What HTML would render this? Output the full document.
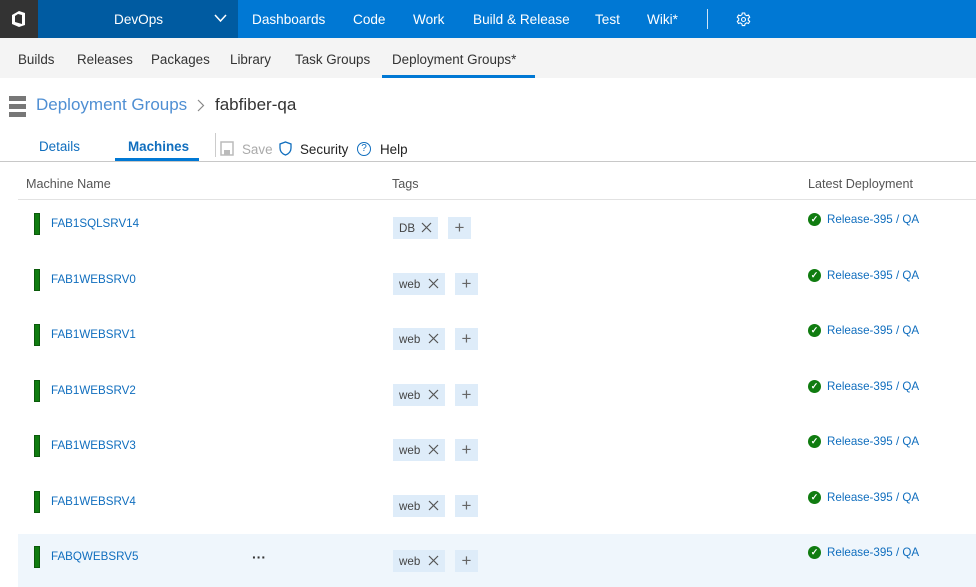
<!DOCTYPE html>
<html><head><style>
*{margin:0;padding:0;box-sizing:border-box}
body{width:976px;height:587px;overflow:hidden;font-family:"Liberation Sans",sans-serif;background:#fff;position:relative;color:#333}
.a{position:absolute;white-space:nowrap}
.top{left:0;top:0;width:976px;height:38px;background:#0078d4}
.nav{color:#fff;font-size:13.6px;top:12px}
.sub{top:38px;left:0;width:976px;height:40px;background:#f4f4f4}
.sn{top:52px;font-size:13.4px;color:#333}
.link{color:#106ebe;font-size:11.6px}
.bar{width:6px;height:22px;background:#107c10;border:1px solid #0b5a0b}
.tag{height:22px;background:#deecf9;font-size:11.6px;color:#444;padding:5px 6px;}
.x{position:absolute;right:6px;top:5px;width:11px;height:11px}
.plus{width:23px;height:22px;background:#deecf9;color:#666;font-size:17px;text-align:center;line-height:21px}
.chk{width:13px;height:13px;border-radius:50%;background:#107c10;color:#fff;font-size:9px;text-align:center;line-height:13px;font-weight:bold}
</style></head><body>
<div class="a top"></div>
<div class="a" style="left:0;top:0;width:38px;height:38px;background:#333"></div>
<svg class="a" style="left:10px;top:10px" width="18" height="18" viewBox="0 0 18 18"><path d="M2 5 L9 1 L15 3 L15 15 L9 17 L2 14 Z M5 6 L5 12 L12 14 L12 5 L8 4 Z" fill="#fff" fill-rule="evenodd"/></svg>
<div class="a" style="left:38px;top:0;width:200px;height:38px;background:#005ba1"></div>
<div class="a nav" style="left:114px">DevOps</div>
<svg class="a" style="left:214px;top:14px" width="13" height="9"><path d="M1 1 L6.5 7 L12 1" stroke="#fff" stroke-width="1.5" fill="none"/></svg>
<div class="a nav" style="left:252px">Dashboards</div>
<div class="a nav" style="left:353px">Code</div>
<div class="a nav" style="left:413px">Work</div>
<div class="a nav" style="left:473px">Build &amp; Release</div>
<div class="a nav" style="left:595px">Test</div>
<div class="a nav" style="left:647px">Wiki*</div>
<div class="a" style="left:707px;top:9px;width:1px;height:20px;background:#cfe4f6"></div>
<svg class="a" style="left:736px;top:12px" width="15" height="15" viewBox="0 0 15 15"><path d="M6.3 1 h2.4 l.4 1.8 l1.6 .9 l1.8-.6 l1.2 2.1 l-1.4 1.2 v1.8 l1.4 1.2 l-1.2 2.1 l-1.8-.6 l-1.6 .9 l-.4 1.8 h-2.4 l-.4-1.8 l-1.6-.9 l-1.8 .6 l-1.2-2.1 l1.4-1.2 v-1.8 l-1.4-1.2 l1.2-2.1 l1.8 .6 l1.6-.9 z" stroke="#fff" stroke-width="1.1" fill="none"/><circle cx="7.5" cy="7.5" r="2" stroke="#fff" stroke-width="1.1" fill="none"/></svg>
<div class="a sub"></div>
<div class="a sn" style="left:18px">Builds</div>
<div class="a sn" style="left:77px">Releases</div>
<div class="a sn" style="left:151px">Packages</div>
<div class="a sn" style="left:230px">Library</div>
<div class="a sn" style="left:295px">Task Groups</div>
<div class="a sn" style="left:392px">Deployment Groups*</div>
<div class="a" style="left:382px;top:75px;width:153px;height:3px;background:#0078d4"></div>
<svg class="a" style="left:9px;top:96px" width="17" height="21"><rect x="0" y="0" width="17" height="5" fill="#777"/><rect x="0" y="8" width="17" height="5" fill="#777"/><rect x="0" y="16" width="17" height="5" fill="#777"/></svg>
<div class="a" style="left:36px;top:95px;font-size:17px;color:#4f8fd3">Deployment Groups</div>
<svg class="a" style="left:197px;top:99px" width="8" height="13"><path d="M1 1 L6.5 6.5 L1 12" stroke="#888" stroke-width="1.2" fill="none"/></svg>
<div class="a" style="left:215px;top:95px;font-size:17px;color:#333">fabfiber-qa</div>
<div class="a" style="left:39px;top:139px;font-size:13.4px;color:#106ebe">Details</div>
<div class="a" style="left:128px;top:139px;font-size:13.4px;color:#106ebe;font-weight:bold">Machines</div>
<div class="a" style="left:115px;top:158px;width:84px;height:3px;background:#0078d4"></div>
<div class="a" style="left:215px;top:133px;width:1px;height:24px;background:#ccc"></div>
<svg class="a" style="left:220px;top:141px" width="14" height="15"><rect x="1" y="1" width="12" height="13" stroke="#bbb" stroke-width="1.5" fill="none"/><rect x="4" y="9" width="6" height="5" fill="#bbb"/></svg>
<div class="a" style="left:242px;top:142px;font-size:13.4px;color:#aaa">Save</div>
<svg class="a" style="left:279px;top:141px" width="13" height="15"><path d="M6.5 1 L12 3 L12 7 Q12 12 6.5 14 Q1 12 1 7 L1 3 Z" stroke="#106ebe" stroke-width="1.3" fill="none"/></svg>
<div class="a" style="left:300px;top:142px;font-size:13.4px;color:#222">Security</div>
<div class="a" style="left:357px;top:142px;width:14px;height:14px;border:1.3px solid #106ebe;border-radius:50%;font-size:10px;color:#106ebe;text-align:center;line-height:12px">?</div>
<div class="a" style="left:380px;top:142px;font-size:13.4px;color:#222">Help</div>
<div class="a" style="left:0;top:161px;width:976px;height:1px;background:#c8c8c8"></div>
<div class="a" style="left:26px;top:177px;font-size:12.6px;color:#555">Machine Name</div>
<div class="a" style="left:392px;top:177px;font-size:12.6px;color:#555">Tags</div>
<div class="a" style="left:808px;top:177px;font-size:12.6px;color:#555">Latest Deployment</div>
<div class="a" style="left:18px;top:199px;width:958px;height:1px;background:#e2e2e2"></div>
<div class="a" style="left:18px;top:534px;width:958px;height:53px;background:#eff6fc"></div>
<div class="a" style="left:252px;top:549px;font-size:14px;font-weight:bold;color:#333">···</div>

<div id="rows"></div>
<script>
var names=["FAB1SQLSRV14","FAB1WEBSRV0","FAB1WEBSRV1","FAB1WEBSRV2","FAB1WEBSRV3","FAB1WEBSRV4","FABQWEBSRV5"];
var h="";
for(var i=0;i<7;i++){var y=Math.round(224+i*55.5);var t=i==0?"DB":"web";var pw=i==0?55:62;
h+='<div class="a bar" style="left:34px;top:'+(y-11)+'px"></div>';
h+='<div class="a link" style="left:51px;top:'+(y-7)+'px">'+names[i]+'</div>';
h+='<div class="a tag" style="left:393px;top:'+(y-7)+'px;width:'+(i==0?45:52)+'px">'+t+'<svg class="x"><path d="M1 1 L10 10 M10 1 L1 10" stroke="#555" stroke-width="1.2"/></svg></div>';
h+='<div class="a plus" style="left:'+(393+pw)+'px;top:'+(y-7)+'px">+</div>';
h+='<div class="a chk" style="left:808px;top:'+(y-11)+'px">✓</div>';
h+='<div class="a link" style="left:827px;top:'+(y-11)+'px">Release-395 / QA</div>';}
document.getElementById("rows").innerHTML=h;
</script>
</body></html>
